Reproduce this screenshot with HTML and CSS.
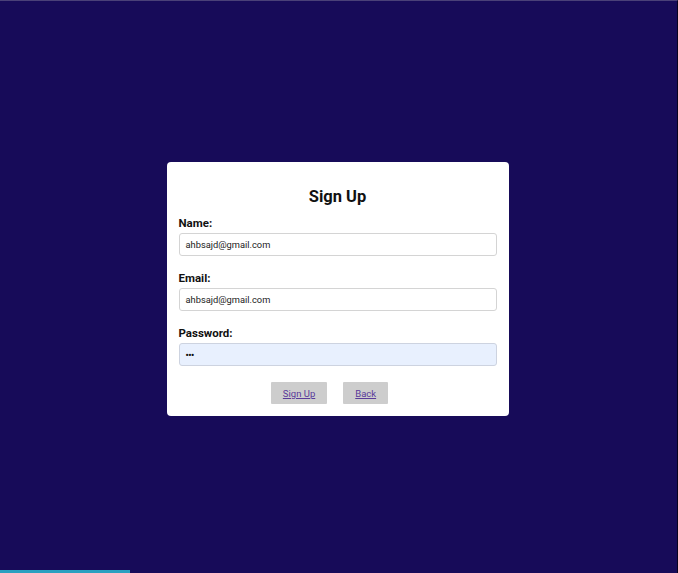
FILE: index.html
```html
<!DOCTYPE html>
<html lang="en">
<head>
<meta charset="utf-8">
<title>Sign Up</title>
<link rel="stylesheet" href="styles.css">
</head>
<body>
<main class="page">
  <form class="card">
    <h2 class="title">Sign Up</h2>
    <div class="field">
      <label class="label">Name:</label>
      <div class="input">ahbsajd@gmail.com</div>
    </div>
    <div class="field">
      <label class="label">Email:</label>
      <div class="input">ahbsajd@gmail.com</div>
    </div>
    <div class="field">
      <label class="label">Password:</label>
      <div class="input input-autofill"><span class="dots">•••</span></div>
    </div>
    <div class="actions">
      <span class="btn"><a href="#" class="link">Sign Up</a></span>
      <span class="btn"><a href="#" class="link">Back</a></span>
    </div>
  </form>
</main>
<div class="progress"></div>
</body>
</html>
```
FILE: styles.css
```css
* { box-sizing: border-box; }
html, body { margin: 0; padding: 0; height: 100%; }
body {
  background: #170b59;
  font-family: Roboto, "Liberation Sans", Arial, sans-serif;
  color: #111;
  border-top: 1px solid #4a4178;
  border-right: 1px solid #07031f;
  overflow: hidden;
  position: relative;
}
.page {
  height: 100%;
  display: flex;
  align-items: flex-start;
  justify-content: center;
  padding-top: 161px;
  padding-right: 2px;
}
.card {
  width: 342px;
  background: #fff;
  border-radius: 4px;
  padding: 13px 12px 12px;
  display: flex;
  flex-direction: column;
}
.title {
  margin: 12px 0 9px;
  font-size: 16.5px;
  line-height: 20px;
  font-weight: 700;
  text-align: center;
  color: #111;
}
.field {
  display: flex;
  flex-direction: column;
  margin-bottom: 15px;
}
.label {
  font-size: 11.5px;
  font-weight: 700;
  line-height: 14px;
  margin-bottom: 3px;
  color: #111;
}
.input {
  height: 23px;
  border: 1px solid #d4d4d4;
  border-radius: 3px;
  padding: 0 6px;
  font-size: 9.3px;
  line-height: 21px;
  color: #222;
  background: #fff;
}
.input-autofill {
  background: #e8f0fe;
  border-color: #cdd3e0;
}
.dots {
  font-size: 9px;
  font-weight: 700;
  letter-spacing: -0.5px;
  color: #111;
}
.actions {
  display: flex;
  justify-content: center;
  margin-top: 1px;
}
.btn {
  height: 22px;
  padding: 0 12px;
  margin-right: 16px;
  background: #cdcdcd;
  border-radius: 1px;
  display: flex;
  align-items: center;
}
.link {
  font-size: 9.5px;
  color: #5a3a9a;
  text-decoration: underline;
}
.progress {
  position: absolute;
  left: 0;
  bottom: 0;
  width: 130px;
  height: 3px;
  background: #2aa0c0;
}
```
